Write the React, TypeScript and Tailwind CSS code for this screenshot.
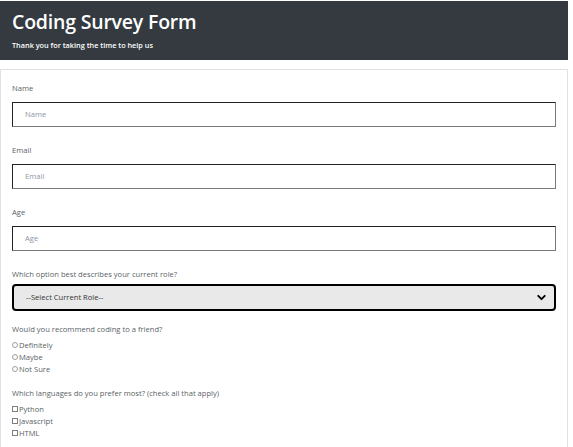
import { ChevronDown } from 'lucide-react';

const Field = ({ label, placeholder }: { label: string; placeholder: string }) => (
  <div className="mb-[17px]">
    <label className="block text-[7.6px] text-[#5a5f66] mb-[8px] leading-[12px]">{label}</label>
    <div className="h-[25px] flex items-center px-[12px] border border-[#222] border-b-[#7a7a7a] border-r-[#7a7a7a] border-b-[1.5px] border-r-[1.5px] text-[7.6px] text-[#8c96a3]">
      {placeholder}
    </div>
  </div>
);

const App = () => {
  const recommend = ['Definitely', 'Maybe', 'Not Sure'];
  const languages = ['Python', 'Javascript', 'HTML'];

  return (
    <div className="w-[573px] h-[447px] overflow-hidden bg-white" style={{ fontFamily: '"Open Sans", sans-serif' }}>
      <div className="w-[568px] pt-px">
        {/* Header */}
        <div className="bg-[#343a40] h-[59px] px-[12px] pt-[8px]">
          <h1 className="text-[19.5px] font-semibold text-white leading-[26px] tracking-[-0.2px]">Coding Survey Form</h1>
          <p className="text-[7.3px] font-semibold text-white mt-[5px] leading-[10px]">Thank you for taking the time to help us</p>
        </div>

        {/* Form card */}
        <div className="mt-[9px] border border-[#dee2e6] h-[400px] px-[11px] pt-[12px]">
          <Field label="Name" placeholder="Name" />
          <Field label="Email" placeholder="Email" />
          <Field label="Age" placeholder="Age" />

          <div className="mb-[12px]">
            <label className="block text-[7.6px] text-[#5a5f66] mb-[4px] leading-[12px]">
              Which option best describes your current role?
            </label>
            <div className="h-[27px] flex items-center justify-between pl-[12px] pr-[6px] bg-[#e9e9e9] border-2 border-black rounded-[4px] text-[7.6px] text-[#333]">
              <span>--Select Current Role--</span>
              <ChevronDown size={13} strokeWidth={3.5} className="text-black" />
            </div>
          </div>

          <div className="mb-[12px]">
            <p className="text-[7.6px] text-[#5a5f66] leading-[12px] mb-[4px]">Would you recommend coding to a friend?</p>
            {recommend.map((r) => (
              <div key={r} className="flex items-center text-[7.6px] text-[#5a5f66] leading-[12px]">
                <span className="inline-block w-[6px] h-[6px] rounded-full border border-[#9aa0a6] mr-px" />
                {r}
              </div>
            ))}
          </div>

          <div>
            <p className="text-[7.6px] text-[#5a5f66] leading-[12px] mb-[4px]">
              Which languages do you prefer most? (check all that apply)
            </p>
            {languages.map((l) => (
              <div key={l} className="flex items-center text-[7.6px] text-[#5a5f66] leading-[12px]">
                <span className="inline-block w-[6px] h-[6px] border border-[#7a7f86] mr-px" />
                {l}
              </div>
            ))}
          </div>
        </div>
      </div>
    </div>
  );
};

export default App;
